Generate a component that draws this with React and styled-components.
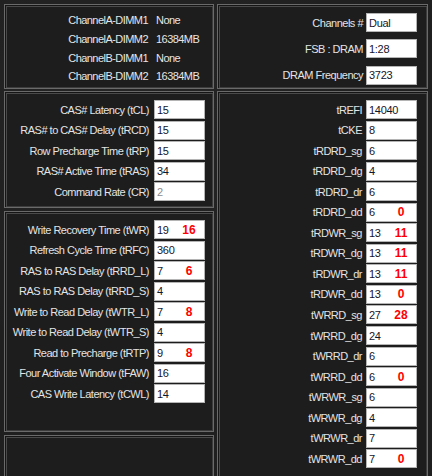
import React from 'react';
import styled, { createGlobalStyle } from 'styled-components';

const GlobalStyle = createGlobalStyle`
  html, body {
    margin: 0;
    padding: 0;
    background: #1f1f1f;
    overflow: hidden;
  }
  body {
    font-family: 'Liberation Sans', Arial, sans-serif;
  }
`;

const dimms = [
  ['ChannelA-DIMM1', 'None'],
  ['ChannelA-DIMM2', '16384MB'],
  ['ChannelB-DIMM1', 'None'],
  ['ChannelB-DIMM2', '16384MB'],
];

const general = [
  ['Channels #', 'Dual'],
  ['FSB : DRAM', '1:28'],
  ['DRAM Frequency', '3723'],
];

const primary = [
  ['CAS# Latency (tCL)', '15'],
  ['RAS# to CAS# Delay (tRCD)', '15'],
  ['Row Precharge Time (tRP)', '15'],
  ['RAS# Active Time (tRAS)', '34'],
  ['Command Rate (CR)', '2', null, true],
];

const secondary = [
  ['Write Recovery Time (tWR)', '19', '16'],
  ['Refresh Cycle Time (tRFC)', '360'],
  ['RAS to RAS Delay (tRRD_L)', '7', '6'],
  ['RAS to RAS Delay (tRRD_S)', '4'],
  ['Write to Read Delay (tWTR_L)', '7', '8'],
  ['Write to Read Delay (tWTR_S)', '4'],
  ['Read to Precharge (tRTP)', '9', '8'],
  ['Four Activate Window (tFAW)', '16'],
  ['CAS Write Latency (tCWL)', '14'],
];

const tertiary = [
  ['tREFI', '14040'],
  ['tCKE', '8'],
  ['tRDRD_sg', '6'],
  ['tRDRD_dg', '4'],
  ['tRDRD_dr', '6'],
  ['tRDRD_dd', '6', '0'],
  ['tRDWR_sg', '13', '11'],
  ['tRDWR_dg', '13', '11'],
  ['tRDWR_dr', '13', '11'],
  ['tRDWR_dd', '13', '0'],
  ['tWRRD_sg', '27', '28'],
  ['tWRRD_dg', '24'],
  ['tWRRD_dr', '6'],
  ['tWRRD_dd', '6', '0'],
  ['tWRWR_sg', '6'],
  ['tWRWR_dg', '4'],
  ['tWRWR_dr', '7'],
  ['tWRWR_dd', '7', '0'],
];

const TimingRows = ({ rows, gap }) =>
  rows.map(([label, value, alt, disabled]) => (
    <TimingRow key={label} $gap={gap}>
      <Label>{label}</Label>
      <ValueBox>
        <Value $disabled={disabled}>{value}</Value>
        {alt && <Alt>{alt}</Alt>}
      </ValueBox>
    </TimingRow>
  ));

const App = () => {
  return (
    <>
      <GlobalStyle />
      <Screen>
        <Panel $area="tl" $pad="6px 0 0 0">
          {dimms.map(([name, size]) => (
            <DimmRow key={name}>
              <DimmName>{name}</DimmName>
              <DimmSize>{size}</DimmSize>
            </DimmRow>
          ))}
        </Panel>
        <Panel $area="tr" $pad="8px 10px 0 0">
          <GeneralList>
            {general.map(([label, value]) => (
              <TimingRow key={label} $gap={3}>
                <Label>{label}</Label>
                <ValueBox>
                  <Value>{value}</Value>
                </ValueBox>
              </TimingRow>
            ))}
          </GeneralList>
        </Panel>
        <LeftStack>
          <Panel $height={117} $pad="8px 8px 0 0">
            <TimingList>
              <TimingRows rows={primary} gap={5} />
            </TimingList>
          </Panel>
          <Panel $height={221} $pad="8px 8px 0 0">
            <TimingList>
              <TimingRows rows={secondary} gap={5} />
            </TimingList>
          </Panel>
          <Panel $height={80} />
        </LeftStack>
        <Panel $area="right" $height={420} $pad="8px 10px 0 0">
          <TimingList>
            <TimingRows rows={tertiary} gap={4} />
          </TimingList>
        </Panel>
      </Screen>
    </>
  );
};

export default App;

const Screen = styled.div`
  width: 432px;
  height: 476px;
  box-sizing: border-box;
  padding: 4px 0 0 4px;
  display: grid;
  grid-template-columns: 210px 211px;
  grid-template-rows: 85px auto;
  grid-template-areas:
    'tl tr'
    'left right';
  column-gap: 3px;
  row-gap: 2px;
  overflow: hidden;
  background:
    radial-gradient(circle at 30% 20%, rgba(255, 255, 255, 0.025), transparent 60%),
    #1f1f1f;
`;

const Panel = styled.div`
  grid-area: ${(p) => p.$area || 'auto'};
  box-sizing: border-box;
  height: ${(p) => (p.$height ? `${p.$height}px` : 'auto')};
  padding: ${(p) => p.$pad || '0'};
  border: 1px solid #6a6a6a;
  box-shadow: inset 1px 1px 0 #151515, inset 2px 2px 0 #4a4a4a,
    inset -1px -1px 0 #3c3c3c;
  background: #1d1d1d;
`;

const LeftStack = styled.div`
  grid-area: left;
  display: flex;
  flex-direction: column;
  gap: 3px;
`;

const DimmRow = styled.div`
  display: flex;
  align-items: center;
  height: 18.7px;
  gap: 8px;
  font-size: 11px;
  letter-spacing: -0.55px;
  color: #e6e6e6;
`;

const DimmName = styled.div`
  width: 143px;
  text-align: right;
`;

const DimmSize = styled.div``;

const GeneralList = styled.div`
  display: flex;
  flex-direction: column;
  gap: 7.3px;
`;

const TimingList = styled.div`
  display: flex;
  flex-direction: column;
  gap: 1.55px;
`;

const TimingRow = styled.div`
  display: flex;
  align-items: center;
  justify-content: flex-end;
  gap: ${(p) => p.$gap}px;
  height: 19px;
`;

const Label = styled.div`
  font-size: 11px;
  letter-spacing: -0.5px;
  color: #e4e4e4;
  white-space: nowrap;
`;

const ValueBox = styled.div`
  flex-shrink: 0;
  box-sizing: border-box;
  width: 51px;
  height: 19px;
  display: flex;
  align-items: center;
  padding-left: 2px;
  padding-right: 3px;
  background: #ffffff;
  border: 1px solid #b4b4b4;
`;

const Value = styled.div`
  flex: 1;
  font-size: 11px;
  letter-spacing: -0.3px;
  color: ${(p) => (p.$disabled ? '#8c8c8c' : '#141428')};
`;

const Alt = styled.div`
  width: 24px;
  text-align: center;
  font-size: 12px;
  font-weight: bold;
  color: #ff0000;
`;
